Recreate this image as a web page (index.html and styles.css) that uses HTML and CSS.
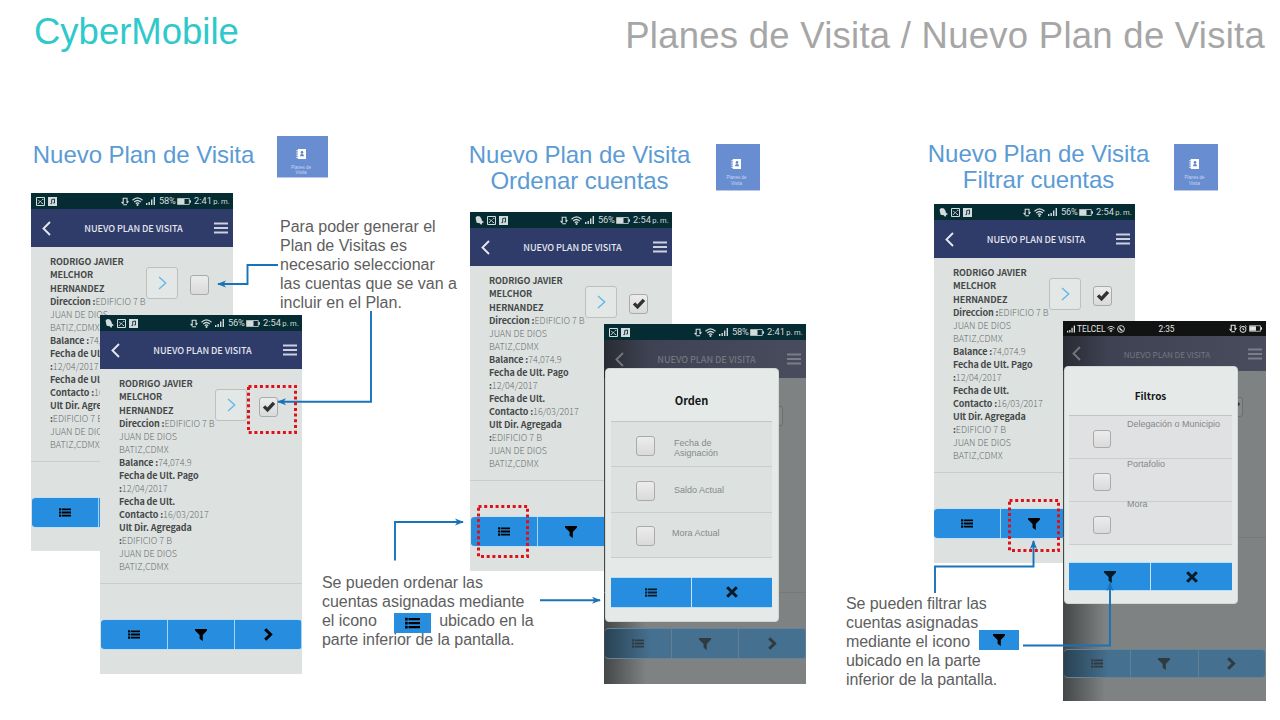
FILE: index.html
```html
<!DOCTYPE html>
<html lang="es">
<head>
<meta charset="utf-8">
<title>CyberMobile - Planes de Visita</title>
<link rel="stylesheet" href="styles.css">
</head>
<body>
<svg class="defs" aria-hidden="true">
  <symbol id="i-list" viewBox="0 0 12 9"><path d="M2.8 1.3H12M2.8 4.5H12M2.8 7.7H12" stroke="currentColor" stroke-width="1.8"/><path d="M1.1.2v2.2M1.1 3.4v2.2M1.1 6.6v2.2" stroke="currentColor" stroke-width="2.1"/></symbol>
  <symbol id="i-filter" viewBox="0 0 12 12"><path d="M0 0h12v1.5L7.8 6v6L4.6 9.8V6L0 1.5z" fill="currentColor"/></symbol>
  <symbol id="i-next" viewBox="0 0 9 13"><path d="M1.2 1.2L6.6 6.5L1.2 11.8" fill="none" stroke="currentColor" stroke-width="3"/></symbol>
  <symbol id="i-close" viewBox="0 0 12 12"><path d="M1.2 1.2L10.8 10.8M10.8 1.2L1.2 10.8" stroke="currentColor" stroke-width="3"/></symbol>
  <symbol id="i-back" viewBox="0 0 9 15"><path d="M8 1L1.5 7.5L8 14" fill="none" stroke="currentColor" stroke-width="1.9"/></symbol>
  <symbol id="i-menu" viewBox="0 0 14 12"><path d="M0 1.5h14M0 6h14M0 10.5h14" stroke="currentColor" stroke-width="1.8"/></symbol>
  <symbol id="i-go" viewBox="0 0 9 14"><path d="M1 1L7.7 7L1 13" fill="none" stroke="currentColor" stroke-width="1.4"/></symbol>
  <symbol id="i-tick" viewBox="0 0 14 12"><path d="M.8 6.5L3.3 4.2L5.3 6.5L10.7.7L13.2 2.9L5.6 11.3z" fill="currentColor"/></symbol>
  <symbol id="i-bell" viewBox="0 0 9 9"><path d="M.6 1.2L2.5 0L5 .6L6.6 3L6.8 4.6L9 6.3L7.4 6.8L6.2 9L4.7 7.3L1.7 6.8L1 4z" fill="currentColor"/></symbol>
  <symbol id="i-pic" viewBox="0 0 9 9"><path d="M.5.5h8v8h-8z" fill="none" stroke="currentColor"/><path d="M1.8 7L4 4.8L2.2 2.8M4 4.8L5.5 3.6M4.8 5.3L7.2 7M6 2.4h1.4" fill="none" stroke="currentColor" stroke-width=".9"/></symbol>
  <symbol id="i-music" viewBox="0 0 9 9"><path d="M0 0h9v9H0z" fill="currentColor"/><path d="M3.7 6.5V2.5L6.5 2v4M2.4 6.6h1.3M5.2 6h1.3" fill="none" stroke="#052c33" stroke-width=".9"/></symbol>
  <symbol id="i-rotate" viewBox="0 0 8 9"><path d="M2.2 6.8V1.2H6V6M2.2 7.8H6M.6 4.8L2.2 6.8M7.4 4L6 6.2" fill="none" stroke="currentColor" stroke-width="1.1"/></symbol>
  <symbol id="i-wifi" viewBox="0 0 11 9"><path d="M.5 3.3Q5.5-1.4 10.5 3.3M2.2 5Q5.5 2 8.8 5M3.8 6.7Q5.5 5.2 7.2 6.7" fill="none" stroke="currentColor" stroke-width="1.2"/><circle cx="5.5" cy="8" r="1" fill="currentColor"/></symbol>
  <symbol id="i-signal" viewBox="0 0 9 8"><path d="M.7 6v2M3.2 5v3M5.7 2.5V8M8.3 0v8" stroke="currentColor" stroke-width="1.4"/></symbol>
  <symbol id="i-batt" viewBox="0 0 14 7"><path d="M.5.5h11.8v6H.5z" fill="none" stroke="currentColor" stroke-width=".8"/><path d="M1 1h6.5v5H1zM12.5 2.2H14v2.6h-1.5z" fill="currentColor"/></symbol>
  <symbol id="i-phone" viewBox="0 0 8 8"><circle cx="4" cy="4" r="3.4" fill="none" stroke="currentColor" stroke-width=".9"/><path d="M2.5 2.5Q3 5 5.5 5.7" fill="none" stroke="currentColor" stroke-width="1.3"/></symbol>
  <symbol id="i-alarm" viewBox="0 0 8 8"><circle cx="4" cy="4.4" r="3" fill="none" stroke="currentColor"/><path d="M.4 1.8L1.8.5M7.6 1.8L6.2.5M4 2.8v1.8H5.2" fill="none" stroke="currentColor"/></symbol>
  <symbol id="i-book" viewBox="0 0 11 10"><path d="M1.8 0H10v10H1.8z" fill="#fff"/><path d="M.3 1.8h2M.3 4h2M.3 6.2h2M.3 8.4h2" stroke="#fff" stroke-width=".9"/><circle cx="6" cy="3.4" r="1.3" fill="#5f83cc"/><path d="M3.9 7.2Q4 5 6 5T8.1 7.2z" fill="#5f83cc"/></symbol>
</svg>

<main class="slide">
  <header class="top">
    <h1 class="brand">CyberMobile</h1>
    <h2 class="crumb">Planes de Visita / Nuevo Plan de Visita</h2>
  </header>

  <h3 class="head head-a">Nuevo Plan de Visita</h3>
  <h3 class="head head-b">Nuevo Plan de Visita<br>Ordenar cuentas</h3>
  <h3 class="head head-c">Nuevo Plan de Visita<br>Filtrar cuentas</h3>

  <div class="tile tile-a"><svg><use href="#i-book"/></svg><span>Planes de<br>Visita</span></div>
  <div class="tile tile-b"><svg><use href="#i-book"/></svg><span>Planes de<br>Visita</span></div>
  <div class="tile tile-c"><svg><use href="#i-book"/></svg><span>Planes de<br>Visita</span></div>

  <section class="phone p1">
    <div class="status"><svg class="s9"><use href="#i-pic"/></svg><svg class="s9"><use href="#i-music"/></svg><div class="sys"><svg class="rot"><use href="#i-rotate"/></svg><svg class="wifi"><use href="#i-wifi"/></svg><svg class="sig"><use href="#i-signal"/></svg><span class="pct">58%</span><svg class="batt"><use href="#i-batt"/></svg><span class="time">2:41 <small>p. m.</small></span></div></div>
    <div class="bar"><svg class="back"><use href="#i-back"/></svg><span>NUEVO PLAN DE VISITA</span><svg class="menu"><use href="#i-menu"/></svg></div>
    <div class="card">
      <div class="info"><b>RODRIGO JAVIER<br>MELCHOR<br>HERNANDEZ<br>Direccion :</b>EDIFICIO 7 B<br>JUAN DE DIOS<br>BATIZ,CDMX<br><b>Balance :</b>74,074.9<br><b>Fecha de Ult. Pago<br>:</b>12/04/2017<br><b>Fecha de Ult.<br>Contacto :</b>16/03/2017<br><b>Ult Dir. Agregada<br>:</b>EDIFICIO 7 B<br>JUAN DE DIOS<br>BATIZ,CDMX</div>
      <div class="go"><svg><use href="#i-go"/></svg></div>
      <div class="check"></div>
    </div>
    <div class="actions"><div><svg class="list"><use href="#i-list"/></svg></div><div><svg class="filter"><use href="#i-filter"/></svg></div><div><svg class="next"><use href="#i-next"/></svg></div></div>
  </section>

  <section class="phone p2">
    <div class="status"><svg class="s9"><use href="#i-bell"/></svg><svg class="s9"><use href="#i-pic"/></svg><svg class="s9"><use href="#i-music"/></svg><div class="sys"><svg class="rot"><use href="#i-rotate"/></svg><svg class="wifi"><use href="#i-wifi"/></svg><svg class="sig"><use href="#i-signal"/></svg><span class="pct">56%</span><svg class="batt"><use href="#i-batt"/></svg><span class="time">2:54 <small>p. m.</small></span></div></div>
    <div class="bar"><svg class="back"><use href="#i-back"/></svg><span>NUEVO PLAN DE VISITA</span><svg class="menu"><use href="#i-menu"/></svg></div>
    <div class="card">
      <div class="info"><b>RODRIGO JAVIER<br>MELCHOR<br>HERNANDEZ<br>Direccion :</b>EDIFICIO 7 B<br>JUAN DE DIOS<br>BATIZ,CDMX<br><b>Balance :</b>74,074.9<br><b>Fecha de Ult. Pago<br>:</b>12/04/2017<br><b>Fecha de Ult.<br>Contacto :</b>16/03/2017<br><b>Ult Dir. Agregada<br>:</b>EDIFICIO 7 B<br>JUAN DE DIOS<br>BATIZ,CDMX</div>
      <div class="go"><svg><use href="#i-go"/></svg></div>
      <div class="check"><svg><use href="#i-tick"/></svg></div>
    </div>
    <div class="actions"><div><svg class="list"><use href="#i-list"/></svg></div><div><svg class="filter"><use href="#i-filter"/></svg></div><div><svg class="next"><use href="#i-next"/></svg></div></div>
  </section>

  <section class="phone p3">
    <div class="status"><svg class="s9"><use href="#i-bell"/></svg><svg class="s9"><use href="#i-pic"/></svg><svg class="s9"><use href="#i-music"/></svg><div class="sys"><svg class="rot"><use href="#i-rotate"/></svg><svg class="wifi"><use href="#i-wifi"/></svg><svg class="sig"><use href="#i-signal"/></svg><span class="pct">56%</span><svg class="batt"><use href="#i-batt"/></svg><span class="time">2:54 <small>p. m.</small></span></div></div>
    <div class="bar"><svg class="back"><use href="#i-back"/></svg><span>NUEVO PLAN DE VISITA</span><svg class="menu"><use href="#i-menu"/></svg></div>
    <div class="card">
      <div class="info"><b>RODRIGO JAVIER<br>MELCHOR<br>HERNANDEZ<br>Direccion :</b>EDIFICIO 7 B<br>JUAN DE DIOS<br>BATIZ,CDMX<br><b>Balance :</b>74,074.9<br><b>Fecha de Ult. Pago<br>:</b>12/04/2017<br><b>Fecha de Ult.<br>Contacto :</b>16/03/2017<br><b>Ult Dir. Agregada<br>:</b>EDIFICIO 7 B<br>JUAN DE DIOS<br>BATIZ,CDMX</div>
      <div class="go"><svg><use href="#i-go"/></svg></div>
      <div class="check"><svg><use href="#i-tick"/></svg></div>
    </div>
    <div class="actions"><div><svg class="list"><use href="#i-list"/></svg></div><div><svg class="filter"><use href="#i-filter"/></svg></div><div><svg class="next"><use href="#i-next"/></svg></div></div>
  </section>

  <section class="phone p4">
    <div class="status"><svg class="s9"><use href="#i-bell"/></svg><svg class="s9"><use href="#i-pic"/></svg><svg class="s9"><use href="#i-music"/></svg><div class="sys"><svg class="rot"><use href="#i-rotate"/></svg><svg class="wifi"><use href="#i-wifi"/></svg><svg class="sig"><use href="#i-signal"/></svg><span class="pct">56%</span><svg class="batt"><use href="#i-batt"/></svg><span class="time">2:54 <small>p. m.</small></span></div></div>
    <div class="bar"><svg class="back"><use href="#i-back"/></svg><span>NUEVO PLAN DE VISITA</span><svg class="menu"><use href="#i-menu"/></svg></div>
    <div class="card">
      <div class="info"><b>RODRIGO JAVIER<br>MELCHOR<br>HERNANDEZ<br>Direccion :</b>EDIFICIO 7 B<br>JUAN DE DIOS<br>BATIZ,CDMX<br><b>Balance :</b>74,074.9<br><b>Fecha de Ult. Pago<br>:</b>12/04/2017<br><b>Fecha de Ult.<br>Contacto :</b>16/03/2017<br><b>Ult Dir. Agregada<br>:</b>EDIFICIO 7 B<br>JUAN DE DIOS<br>BATIZ,CDMX</div>
      <div class="go"><svg><use href="#i-go"/></svg></div>
      <div class="check"><svg><use href="#i-tick"/></svg></div>
    </div>
    <div class="actions"><div><svg class="list"><use href="#i-list"/></svg></div><div><svg class="filter"><use href="#i-filter"/></svg></div><div><svg class="next"><use href="#i-next"/></svg></div></div>
  </section>

  <section class="phone dim p5">
    <div class="status"><svg class="s9"><use href="#i-pic"/></svg><svg class="s9"><use href="#i-music"/></svg><div class="sys"><svg class="rot"><use href="#i-rotate"/></svg><svg class="wifi"><use href="#i-wifi"/></svg><svg class="sig"><use href="#i-signal"/></svg><span class="pct">58%</span><svg class="batt"><use href="#i-batt"/></svg><span class="time">2:41 <small>p. m.</small></span></div></div>
    <div class="bar"><svg class="back"><use href="#i-back"/></svg><span>NUEVO PLAN DE VISITA</span><svg class="menu"><use href="#i-menu"/></svg></div>
    <div class="card"><div class="check"></div></div>
    <div class="actions"><div><svg class="list"><use href="#i-list"/></svg></div><div><svg class="filter"><use href="#i-filter"/></svg></div><div><svg class="next"><use href="#i-next"/></svg></div></div>
    <div class="modal">
      <h4>Orden</h4>
      <div class="rows">
        <div class="row"><div class="check"></div><span>Fecha de<br>Asignación</span></div>
        <div class="row"><div class="check"></div><span>Saldo Actual</span></div>
        <div class="row last"><div class="check"></div><span>Mora Actual</span></div>
      </div>
      <div class="choices"><div><svg class="list"><use href="#i-list"/></svg></div><div><svg class="close"><use href="#i-close"/></svg></div></div>
    </div>
  </section>

  <section class="phone dim p6">
    <div class="status"><svg class="sig"><use href="#i-signal"/></svg><span class="carrier">TELCEL</span><svg class="mini"><use href="#i-wifi"/></svg><svg class="mini"><use href="#i-phone"/></svg><span class="clock">2:35</span><div class="sys"><svg class="rot"><use href="#i-rotate"/></svg><svg class="mini"><use href="#i-alarm"/></svg><svg class="batt"><use href="#i-batt"/></svg></div></div>
    <div class="bar"><svg class="back"><use href="#i-back"/></svg><span>NUEVO PLAN DE VISITA</span><svg class="menu"><use href="#i-menu"/></svg></div>
    <div class="card"><div class="check"><svg><use href="#i-tick"/></svg></div></div>
    <div class="actions"><div><svg class="list"><use href="#i-list"/></svg></div><div><svg class="filter"><use href="#i-filter"/></svg></div><div><svg class="next"><use href="#i-next"/></svg></div></div>
    <div class="modal">
      <h4>Filtros</h4>
      <div class="rows">
        <div class="row"><div class="check"></div><span>Delegación o Municipio</span></div>
        <div class="row second"><div class="check"></div><span>Portafolio</span></div>
        <div class="row third"><div class="check"></div><span>Mora</span></div>
      </div>
      <div class="choices"><div><svg class="filter"><use href="#i-filter"/></svg></div><div><svg class="close"><use href="#i-close"/></svg></div></div>
    </div>
  </section>

  <p class="note note-a">Para poder generar el<br>Plan de Visitas es<br>necesario seleccionar<br>las cuentas que se van a<br>incluir en el Plan.</p>
  <p class="note note-b">Se pueden ordenar las<br>cuentas asignadas mediante<br>el icono <span class="after">ubicado en la</span><br>parte inferior de la pantalla.</p>
  <p class="note note-c">Se pueden filtrar las<br>cuentas asignadas<br>mediante el icono<br>ubicado en la parte<br>inferior de la pantalla.</p>
  <div class="chip chip-list"><svg><use href="#i-list"/></svg></div>
  <div class="chip chip-filter"><svg><use href="#i-filter"/></svg></div>

  <svg class="lines" viewBox="0 0 1280 720">
    <defs><marker id="tip" viewBox="0 0 10 8" refX="9" refY="4" markerWidth="9" markerHeight="8" markerUnits="userSpaceOnUse" orient="auto"><path d="M0 0L10 4L0 8L2.8 4z" fill="#1873b8"/></marker></defs>
    <g fill="none" stroke="#1873b8" stroke-width="1.9" marker-end="url(#tip)">
      <path d="M278 265H247.5V284H218"/>
      <path d="M371 311V401.7H278"/>
      <path d="M395 560.5V522H463"/>
      <path d="M540 600.3H600"/>
      <path d="M935 593V566.5H1033.5V541"/>
      <path d="M1023 645.5H1110V583"/>
    </g>
    <g fill="none" stroke="#e01018" stroke-width="3" stroke-dasharray="3 2.7">
      <rect x="248.5" y="386.5" width="47" height="46"/>
      <rect x="478.5" y="506.5" width="49" height="50"/>
      <rect x="1009.5" y="500.5" width="49" height="50"/>
    </g>
  </svg>
</main>
</body>
</html>
```
FILE: styles.css
```css
* { box-sizing: border-box; }
body { margin: 0; background: #fff; font-family: "Liberation Sans", Arial, sans-serif; }
h1, h2, h3, h4, p { margin: 0; font-weight: 400; }
svg { display: block; flex: none; }
.defs { position: absolute; width: 0; height: 0; }
.slide { position: relative; width: 1280px; height: 720px; overflow: hidden; }

.top { display: flex; justify-content: space-between; padding: 11px 15px 0 34px; }
.brand { font-size: 36.5px; line-height: 42px; color: #2fc9cb; }
.crumb { font-size: 36.5px; letter-spacing: .26px; line-height: 42px; color: #a6a6a6; padding-top: 4px; white-space: nowrap; }

.head { position: absolute; width: 240px; text-align: center; font-size: 24px; line-height: 26px; letter-spacing: -0.05px; color: #5b9bd5; }
.head-a { left: 23.5px; top: 142px; }
.head-b { left: 459.5px; top: 142px; }
.head-c { left: 918.5px; top: 141px; }

.tile { position: absolute; display: flex; flex-direction: column; align-items: center; width: 44px; height: 47px; padding: 15px 3px 0 0; background: #688dd1; border-bottom: 1px solid #b9c8e8; color: #c8d6f3; font-size: 4.5px; line-height: 6px; text-align: center; }
.tile svg { width: 11px; height: 10px; margin-bottom: 6px; }
.tile-a { left: 277px; top: 136px; width: 51px; height: 42px; padding-top: 13px; line-height: 5px; }
.tile-b { left: 716px; top: 144px; }
.tile-c { left: 1174px; top: 144px; }

.phone { position: absolute; display: flex; flex-direction: column; width: 202px; height: 358px; background: #dde2e1; overflow: hidden; font-family: "Noto Sans CJK JP", "Noto Sans", sans-serif; }
.p1 { left: 31px; top: 193px; }
.p2 { left: 100px; top: 315px; height: 359px; }
.p3 { left: 470px; top: 212px; height: 359px; }
.p4 { left: 934px; top: 204px; width: 201px; height: 359px; }
.p5 { left: 604px; top: 324px; height: 360px; }
.p6 { left: 1063px; top: 321px; width: 203px; height: 380px; }

.status { display: flex; align-items: center; flex: none; height: 16px; padding: 0 4px 0 5px; gap: 3px; background: #052c33; color: #d3dbdc; font-family: Roboto, sans-serif; font-size: 9.3px; line-height: 16px; }
.s9 { width: 9px; height: 9px; }
.sys { display: flex; align-items: center; margin-left: auto; white-space: nowrap; }
.rot { width: 8px; height: 9px; margin-right: 3px; }
.wifi { width: 11px; height: 9px; margin-right: 3px; }
.sig { width: 9px; height: 8px; margin-right: 4px; }
.pct { width: 18px; letter-spacing: -0.2px; }
.batt { width: 14px; height: 7px; margin-right: 3px; }
.time { width: 35px; }
.time small { font-size: 7.6px; margin-left: -1px; letter-spacing: -0.1px; }

.bar { display: flex; align-items: center; justify-content: space-between; flex: none; height: 38px; padding: 0 5px 0 11px; background: #2f3b68; color: #e6e8f0; font-size: 9.1px; }
.bar span { padding-left: 2px; font-weight: 500; letter-spacing: -0.06px; }
.back { width: 9px; height: 15px; }
.menu { width: 14px; height: 12px; color: #ccd0e0; }

.card { display: flex; flex: none; height: 215px; padding: 8px 0 0 19px; border-bottom: 1px solid #c9cecd; }
.info { width: 96px; padding-top: .4px; white-space: nowrap; font-size: 9px; line-height: 13.07px; font-weight: 300; color: #686c6c; }
.info b { font-weight: 700; color: #454848; letter-spacing: -0.1px; }
.go { display: flex; align-items: center; justify-content: center; flex: none; width: 32px; height: 32px; margin-top: 12px; border: 1px solid #bcc1c0; border-radius: 3px; background: #e3e8e7; color: #62b8ea; }
.go svg { width: 9px; height: 14px; }
.check { display: flex; align-items: center; justify-content: center; flex: none; width: 19px; height: 20px; margin: 20px 0 0 12px; border: 1.5px solid #a9abab; border-radius: 3px; background: linear-gradient(#ececec, #dadada); color: #303233; }
.check svg { width: 14px; height: 12px; }

.actions { display: flex; gap: 1px; flex: none; width: 201px; height: 31px; margin: 35px auto 0; border: 1px solid #bfe0f7; border-width: 1px 0; border-radius: 4px; background: #a9d4f4; overflow: hidden; }
.actions > div { display: flex; flex: 1; align-items: center; justify-content: center; background: #278edf; }
.list { width: 12px; height: 9px; }
.filter { width: 12px; height: 12px; }
.next { width: 9px; height: 13px; }
.close { width: 12px; height: 12px; }

.dim { background: linear-gradient(90deg, #444747, #7e8282 42px); }
.dim .bar { background: linear-gradient(90deg, #292b34, #3f4252 45px, #484c5d); color: #73767f; }
.dim .menu { color: #7b7e89; }
.dim .card { border-color: #757979; padding-left: 148px; }
.dim .card .check { background: #858888; border-color: #6b6e6e; }
.dim .actions { border-color: #668399; background: #637f93; }
.dim .actions > div { background: #46708f; color: #303b40; }
.dim .actions > div:first-child { background: linear-gradient(90deg, #294252, #46708f 45px); }

.modal { position: absolute; left: 1px; top: 44px; width: 174px; height: 254px; padding: 0 6px 0 5px; border-radius: 4px; background: #e5e9e8; border: 1px solid #d1d6d6; font-family: "Liberation Sans", Arial, sans-serif; }
.modal h4 { height: 52px; padding-top: 22px; text-align: center; font: 700 11px/18px "Noto Sans CJK JP", sans-serif; color: #151616; }
.modal h4 { padding-top: 22px; }
.rows { background: #dde2e1; border-top: 1px solid #c2c7c6; }
.row { display: flex; align-items: center; height: 45.3px; padding-left: 25px; border-bottom: 1px solid #c9cecd; color: #858989; font-size: 9px; line-height: 10px; white-space: nowrap; }
.row .check { margin: 3px 19px 0 0; }
.row span { padding-top: 7px; }
.row + .row span { padding-top: 2px; }
.row.last span { margin-left: -2px; padding-bottom: 5px; }
.choices { display: flex; gap: 1px; height: 31px; margin-top: 19px; border: 1px solid #b9def7; border-width: 1px 0; background: #c9e3f5; }
.choices > div { display: flex; flex: 1; align-items: center; justify-content: center; background: #278edf; color: #071a28; }

.p6 .status { height: 15px; background: #111313; padding-left: 4px; gap: 2px; font-size: 8.3px; color: #e4e4e4; }
.p6 .status .sig { width: 8px; margin: 0; }
.p6 .mini { width: 8px; height: 8px; }
.p6 .clock { margin-left: 31px; }
.p6 .sys .mini { margin-right: 2px; }
.p6 .sys .rot { margin-right: 2px; }
.p6 .sys .batt { width: 13px; margin: 0; }
.p6 .bar { height: 35px; font-size: 8.2px; padding: 0 4px 0 9px; }
.p6 .bar span { padding-left: 5px; font-weight: 400; }
.p6 .card { height: 167px; padding-left: 149px; padding-top: 6px; }
.p6 .actions { margin-top: 111px; height: 29px; }
.p6 .modal { top: 45px; height: 238px; width: 174px; padding: 0 5px 0 4px; }
.p6 h4 { height: 48px; padding-top: 20px; font-size: 10px; }
.p6 .rows { background: #dfe1e2; }
.p6 .row { height: 43px; padding-left: 24px; align-items: flex-start; }
.p6 .row .check { width: 18px; height: 18px; margin: 14px 16px 0 0; }
.p6 .row span { padding-top: 3px; }
.p6 .row.second span { padding-top: 0; }
.p6 .row.third span { margin-top: -3px; padding-top: 0; }
.p6 .choices { margin-top: 17px; height: 29px; }

.note { position: absolute; font-size: 16px; line-height: 19px; color: #5e5e5e; white-space: nowrap; }
.note-a { left: 280px; top: 217px; }
.note-b { left: 322px; top: 572.5px; letter-spacing: -0.05px; }
.note-c { left: 846px; top: 594px; letter-spacing: -0.08px; }
.after { margin-left: 58px; }
.chip { position: absolute; display: flex; align-items: center; justify-content: center; height: 20px; background: #278edf; }
.chip-list { left: 394px; top: 613px; width: 37px; }
.chip-list svg { width: 15px; height: 12px; }
.chip-filter { left: 979px; top: 630px; width: 40px; }
.chip-filter svg { width: 12px; height: 12px; }
.lines { position: absolute; left: 0; top: 0; width: 1280px; height: 720px; }
```
